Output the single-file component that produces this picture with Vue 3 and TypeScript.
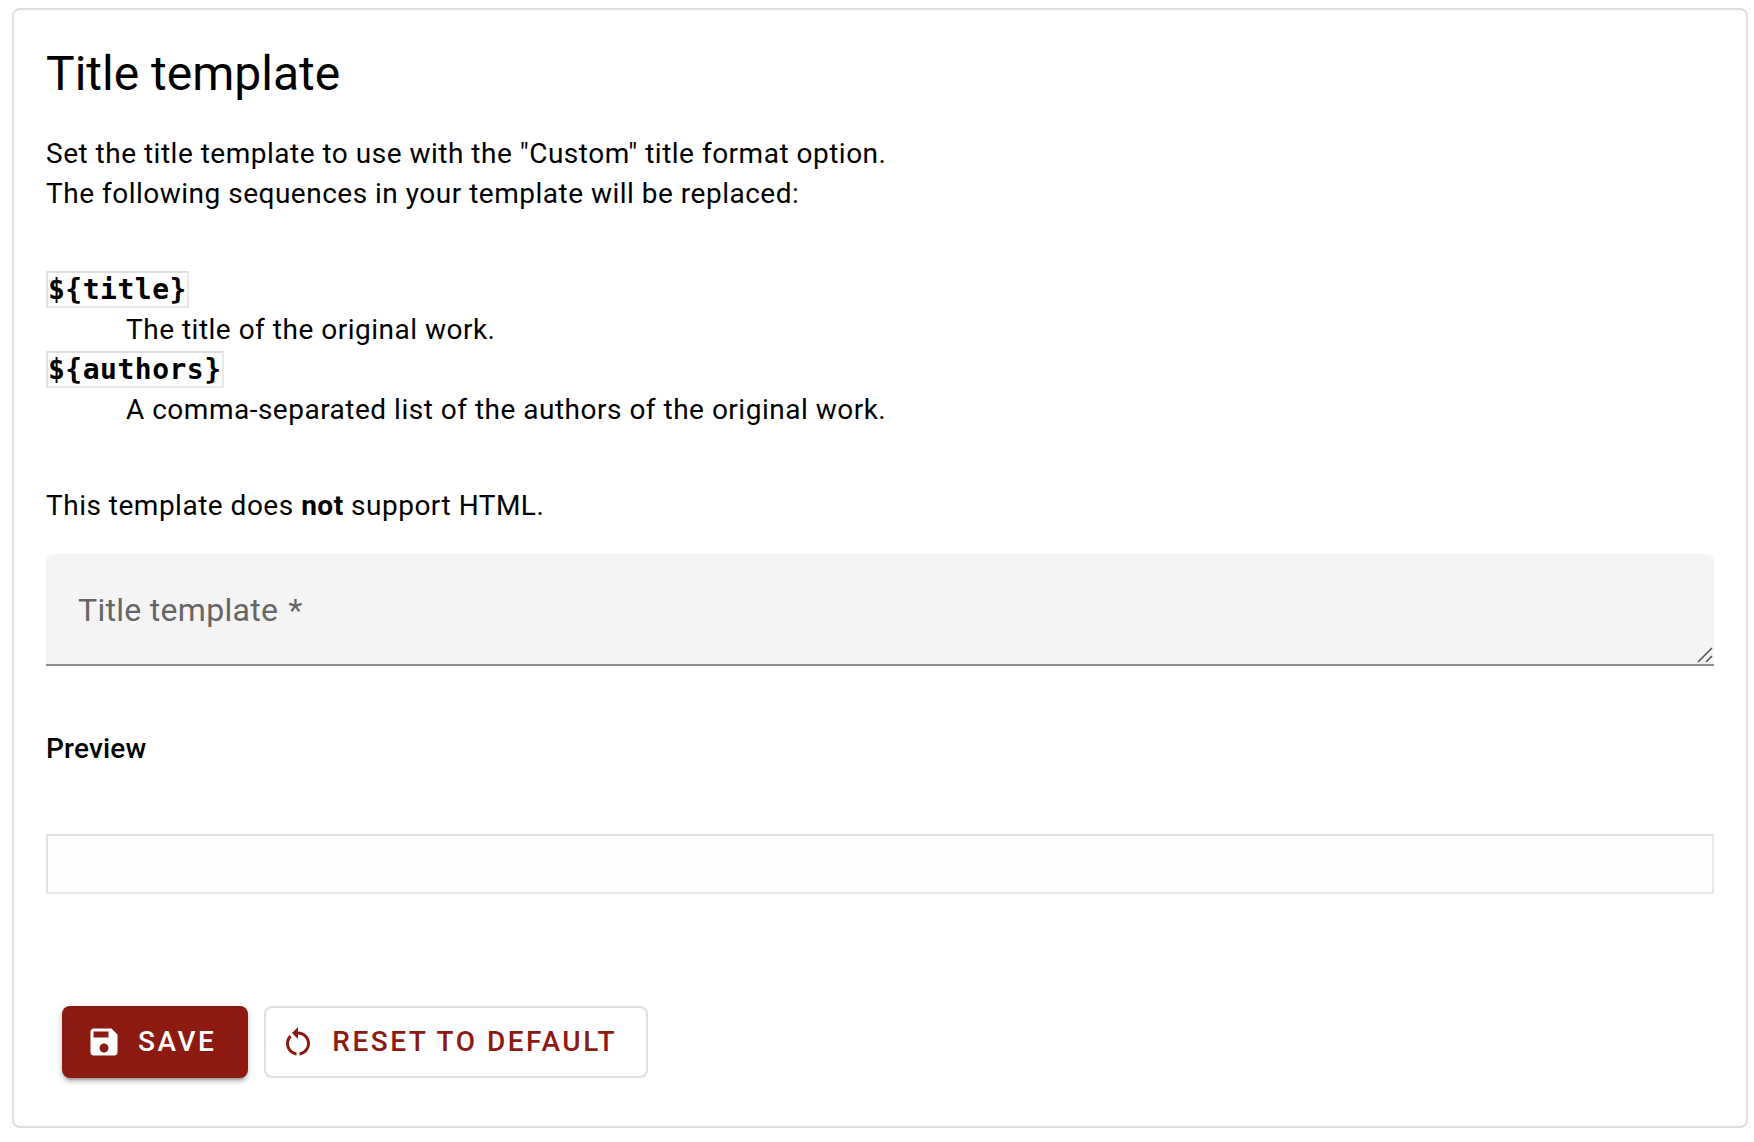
<script setup lang="ts">
import { computed, ref } from 'vue'

interface Sequence {
  token: string
  description: string
}

const sequences: Sequence[] = [
  { token: '${title}', description: 'The title of the original work.' },
  { token: '${authors}', description: 'A comma-separated list of the authors of the original work.' },
]

const template = ref('')

const preview = computed(() =>
  template.value
    .split('${title}').join('TITLE')
    .split('${authors}').join('AUTHORS'),
)

function save(): void {
  template.value = template.value.trim()
}

function reset(): void {
  template.value = ''
}
</script>

<template>
  <main class="page">
    <form class="card" @submit.prevent="save">
      <h1 class="title">Title template</h1>

      <p class="text">
        Set the title template to use with the "Custom" title format option.<br />
        The following sequences in your template will be replaced:
      </p>

      <dl class="sequences">
        <template v-for="item in sequences" :key="item.token">
          <dt><code>{{ item.token }}</code></dt>
          <dd>{{ item.description }}</dd>
        </template>
      </dl>

      <p class="text">This template does <strong>not</strong> support HTML.</p>

      <div class="field">
        <textarea id="template" v-model="template" class="input" rows="1" required></textarea>
        <label v-show="!template" class="label" for="template">Title template <span class="required">*</span></label>
        <svg class="grip" viewBox="0 0 16 16" aria-hidden="true">
          <path d="M1 15 15 1M9 15l6-6" />
        </svg>
      </div>

      <h2 class="subtitle">Preview</h2>
      <output class="preview" for="template">{{ preview }}</output>

      <div class="actions">
        <button type="submit" class="button primary">
          <svg class="icon" viewBox="0 0 24 24" aria-hidden="true">
            <path d="M17 3H5c-1.11 0-2 .9-2 2v14c0 1.1.89 2 2 2h14c1.1 0 2-.9 2-2V7l-4-4zm-5 16c-1.66 0-3-1.34-3-3s1.34-3 3-3 3 1.34 3 3-1.34 3-3 3zm3-10H5V5h10v4z" />
          </svg>
          <span>SAVE</span>
        </button>
        <button type="button" class="button outlined" @click="reset">
          <svg class="icon" viewBox="0 0 24 24" aria-hidden="true">
            <path d="M12 5V2L8 6l4 4V7c3.31 0 6 2.69 6 6 0 2.97-2.17 5.43-5 5.91v2.02c3.95-.49 7-3.85 7-7.93 0-4.42-3.58-8-8-8zM6 13c0-1.65.67-3.15 1.76-4.24L6.34 7.34C4.9 8.79 4 10.79 4 13c0 4.08 3.05 7.44 7 7.93v-2.02c-2.83-.48-5-2.94-5-5.91z" />
          </svg>
          <span>RESET TO DEFAULT</span>
        </button>
      </div>
    </form>
  </main>
</template>

<style>
body {
  margin: 0;
  background: #fff;
}
</style>

<style scoped>
.page {
  padding: 8px 6px 14px 12px;
  font: 400 28px/40px Roboto, sans-serif;
  letter-spacing: 0.0178571429em;
  color: #000;
}

.card {
  display: flex;
  flex-direction: column;
  padding: 32px;
  border: 2px solid #e0e0e0;
  border-radius: 8px;
  background: #fff;
}

.title {
  margin: 0 0 28px;
  font-size: 48px;
  font-weight: 400;
  line-height: 64px;
  letter-spacing: normal;
}

.text {
  margin: 0;
}

.sequences {
  margin: 56px 0;
}

.sequences dt {
  height: 40px;
}

.sequences dd {
  margin: 0 0 0 80px;
}

code {
  border: 2px solid;
  border-color: #e0e0e0 #e8e8e8 #e8e8e8 #e0e0e0;
  background: #fefefe;
  font-family: "DejaVu Sans Mono", monospace;
  font-size: 28px;
  font-weight: 700;
}

.field {
  position: relative;
  display: flex;
  margin-top: 28px;
  border-bottom: 2px solid #8e8e8e;
  border-radius: 8px 8px 0 0;
  background: #f4f4f4;
}

.input {
  box-sizing: border-box;
  width: 100%;
  height: 110px;
  padding: 36px 32px;
  border: 0;
  outline: 0;
  resize: none;
  overflow: hidden;
  background: transparent;
  font: 400 32px/40px Roboto, sans-serif;
}

.label {
  position: absolute;
  top: 36px;
  left: 32px;
  font-size: 32px;
  letter-spacing: 0.009375em;
  color: #666;
  pointer-events: none;
}

.required {
  margin-left: 2px;
}

.grip {
  position: absolute;
  right: 1px;
  bottom: 1px;
  width: 16px;
  height: 16px;
  fill: none;
  stroke: #555;
  stroke-width: 1.6;
}

.subtitle {
  margin: 63px 0 65px;
  font-size: 28px;
  font-weight: 500;
  letter-spacing: 0.0071428571em;
}

.preview {
  box-sizing: border-box;
  min-height: 60px;
  padding: 8px 16px;
  border: 2px solid;
  border-color: #e0e0e0 #e8e8e8 #e8e8e8 #e0e0e0;
  background: #fefefe;
}

.actions {
  display: flex;
  flex-wrap: wrap;
  gap: 16px;
  margin-top: 112px;
  padding: 0 16px 16px;
}

.button {
  display: flex;
  align-items: center;
  gap: 16px;
  box-sizing: border-box;
  height: 72px;
  border: 0;
  border-radius: 8px;
  font: 500 28px/40px Roboto, sans-serif;
  letter-spacing: 0.0892857143em;
  cursor: pointer;
}

.primary {
  padding: 0 32px 0 24px;
  background: #8c1a11;
  color: #fff;
  box-shadow:
    0 6px 2px -4px rgba(0, 0, 0, 0.2),
    0 4px 4px rgba(0, 0, 0, 0.14),
    0 2px 10px rgba(0, 0, 0, 0.12);
}

.outlined {
  padding: 0 29px 0 14px;
  border: 2px solid #e0e0e0;
  background: transparent;
  color: #8c1a11;
}

.icon {
  width: 36px;
  height: 36px;
  fill: currentColor;
}
</style>
